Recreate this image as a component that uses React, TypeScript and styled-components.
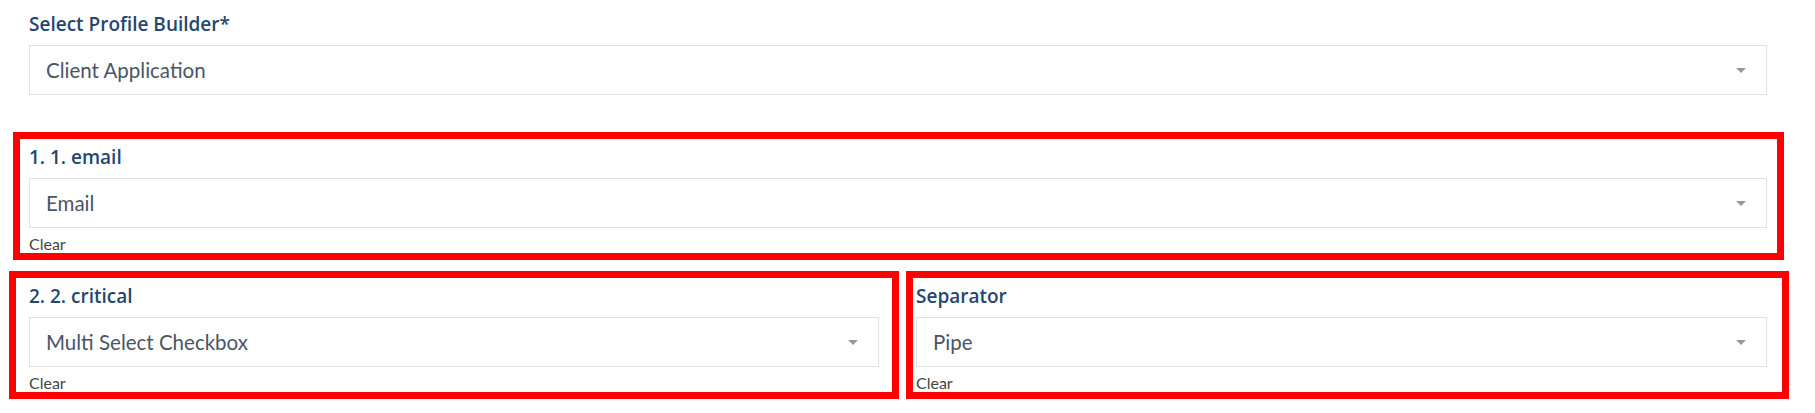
import React from "react";
import styled, { createGlobalStyle } from "styled-components";

const Global = createGlobalStyle`
  html, body { margin: 0; padding: 0; background: #ffffff; }
  body { font-family: Lato, "Open Sans", sans-serif; }
`;

const Page = styled.div`
  width: 1815px;
  height: 413px;
  overflow: hidden;
  display: flex;
  flex-direction: column;
`;

const TopField = styled.div`
  margin: 12px 48px 0 29px;
  display: flex;
  flex-direction: column;
`;

const Highlight = styled.div<{ $pl: number; $pr: number }>`
  border: 7px solid #ff0000;
  padding: 6px ${(p) => p.$pr}px 0 ${(p) => p.$pl}px;
  height: 108px;
  box-sizing: content-box;
  overflow: hidden;
  display: flex;
  flex-direction: column;
`;

const WideBox = styled(Highlight)`
  margin: 37px 31px 0 13px;
`;

const Row = styled.div`
  display: grid;
  grid-template-columns: 890px 883px;
  gap: 7px;
  margin: 11px 0 0 9px;
`;

const Label = styled.div`
  font-family: "Open Sans", Lato, sans-serif;
  font-size: 19px;
  line-height: 24px;
  font-weight: 600;
  color: #24476f;
  margin-bottom: 9px;
  white-space: nowrap;
`;

const SelectBox = styled.div`
  height: 50px;
  box-sizing: border-box;
  border: 1px solid #e2e2e2;
  background: #fff;
  display: flex;
  align-items: center;
  justify-content: space-between;
  padding: 0 20px 0 16px;
`;

const Value = styled.span`
  font-size: 20.5px;
  color: #4a5568;
`;

const Caret = styled.span`
  width: 0;
  height: 0;
  border-left: 5.5px solid transparent;
  border-right: 5.5px solid transparent;
  border-top: 5.5px solid #999999;
  margin-top: 1px;
`;

const Clear = styled.div`
  font-size: 16px;
  line-height: 18px;
  color: #444444;
  margin-top: 7px;
`;

type SelectProps = { label: string; value: string };

const Select = ({ label, value }: SelectProps) => (
  <>
    <Label>{label}</Label>
    <SelectBox role="combobox">
      <Value>{value}</Value>
      <Caret />
    </SelectBox>
  </>
);

export default function App() {
  return (
    <>
      <Global />
      <Page>
        <TopField>
          <Select label="Select Profile Builder*" value="Client Application" />
        </TopField>
        <WideBox $pl={9} $pr={10}>
          <Select label="1. 1. email" value="Email" />
          <Clear>Clear</Clear>
        </WideBox>
        <Row>
          <Highlight $pl={13} $pr={13}>
            <Select label="2. 2. critical" value="Multi Select Checkbox" />
            <Clear>Clear</Clear>
          </Highlight>
          <Highlight $pl={3} $pr={15}>
            <Select label="Separator" value="Pipe" />
            <Clear>Clear</Clear>
          </Highlight>
        </Row>
      </Page>
    </>
  );
}
